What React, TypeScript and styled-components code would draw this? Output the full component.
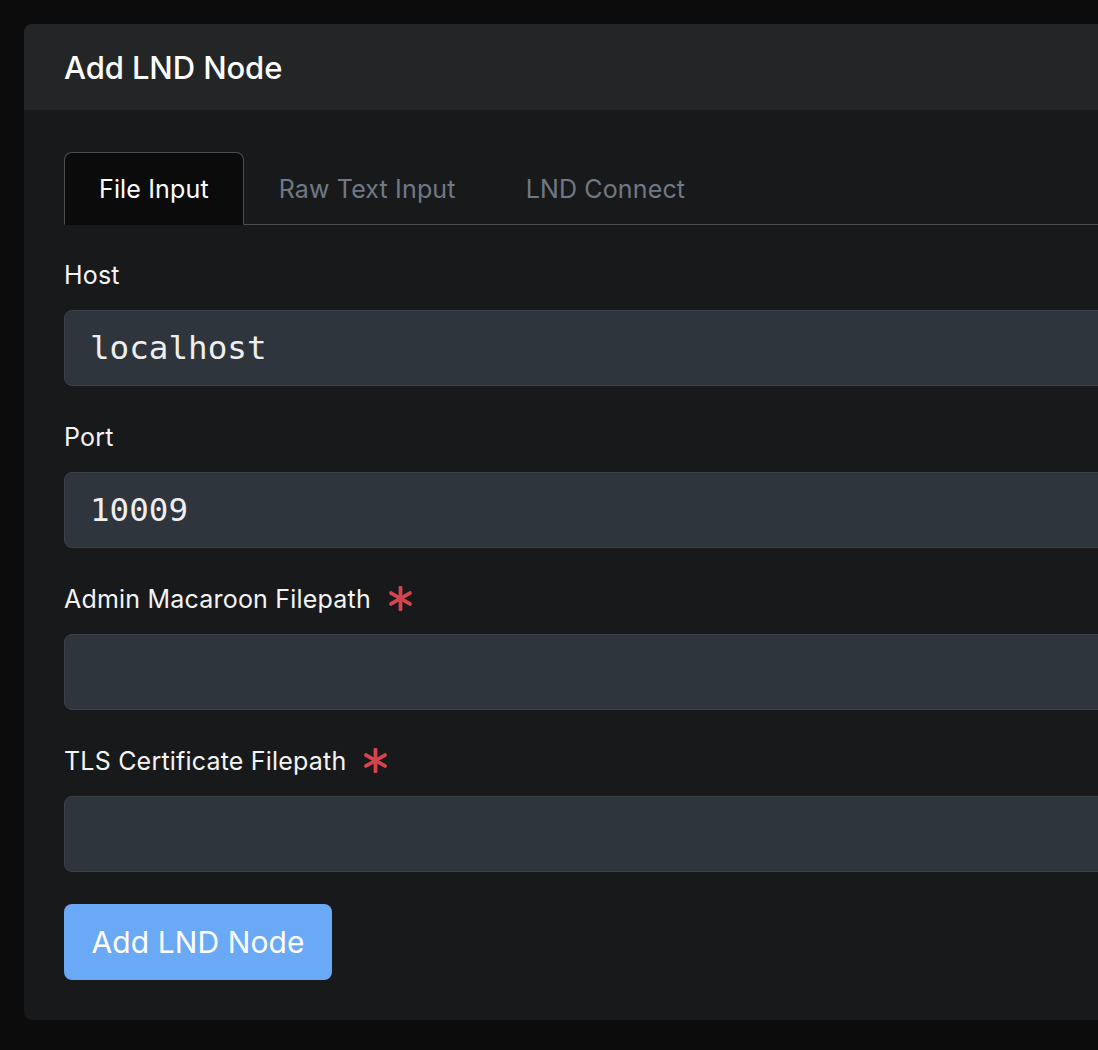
import { createGlobalStyle, styled } from "styled-components";
import { useState } from "react";

const GlobalStyle = createGlobalStyle`
  html, body {
    margin: 0;
    padding: 0;
    background: #0c0c0c;
    overflow: hidden;
  }
  body {
    font-family: Inter, "Noto Sans", "Liberation Sans", sans-serif;
    color: #f4f4f5;
  }
`;

const Page = styled.div`
  padding: 24px 0 0 24px;
  width: 100%;
  height: 1050px;
  box-sizing: border-box;
  overflow: hidden;
`;

const Panel = styled.div`
  width: 1240px;
  background: #18191b;
  border-radius: 8px 0 0 8px;
  overflow: hidden;
`;

const Header = styled.div`
  height: 86px;
  background: #242527;
  display: flex;
  align-items: center;
  padding: 0 40px;
  box-sizing: border-box;
`;

const Title = styled.h2`
  margin: 0;
  font-size: 31px;
  font-weight: 500;
  letter-spacing: -0.1px;
  color: #ffffff;
`;

const Body = styled.div`
  padding: 42px 40px 40px;
`;

const TabBar = styled.div`
  display: flex;
  border-bottom: 1.5px solid #4c4d50;
  margin-bottom: 33px;
`;

const Tab = styled.button<{ $active?: boolean }>`
  font-family: inherit;
  font-size: 25px;
  letter-spacing: 0.15px;
  height: 73px;
  padding: 0 34px;
  margin-bottom: -1.5px;
  border-radius: 8px 8px 0 0;
  border: 1.5px solid ${(p) => (p.$active ? "#4c4d50" : "transparent")};
  border-bottom: ${(p) => (p.$active ? "1.5px solid #0b0b0b" : "none")};
  background: ${(p) => (p.$active ? "#0b0b0b" : "transparent")};
  color: ${(p) => (p.$active ? "#ffffff" : "#6f7985")};
  cursor: pointer;
`;

const Field = styled.div`
  margin-bottom: 34px;

  &:last-of-type {
    margin-bottom: 32px;
  }
`;

const Label = styled.label`
  display: flex;
  align-items: center;
  height: 34px;
  margin-bottom: 18px;
  font-size: 25px;
  letter-spacing: 0.2px;
  color: #f4f4f5;
`;

const Required = styled.svg`
  margin-left: 17px;
  width: 25px;
  height: 25px;
`;

const Input = styled.input`
  display: block;
  width: 100%;
  height: 76px;
  box-sizing: border-box;
  background: #2f353d;
  border: 1.5px solid #3b424b;
  border-radius: 8px;
  padding: 0 25px;
  font-family: "DejaVu Sans Mono", "Liberation Mono", monospace;
  font-size: 32.6px;
  color: #eeeeef;
  outline: none;
`;

const SubmitButton = styled.button`
  height: 76px;
  padding: 0 27.5px;
  border: 0;
  border-radius: 8px;
  background: #6aa9f6;
  color: #ffffff;
  font-family: inherit;
  font-size: 30px;
  letter-spacing: 0.1px;
  cursor: pointer;
`;

const Asterisk = () => (
  <Required viewBox="0 0 24 24">
    <g stroke="#d6444d" strokeWidth="3.6" strokeLinecap="round">
      <line x1="12" y1="1.5" x2="12" y2="22.5" />
      <line x1="2.9" y1="6.75" x2="21.1" y2="17.25" />
      <line x1="2.9" y1="17.25" x2="21.1" y2="6.75" />
    </g>
  </Required>
);

const tabs = ["File Input", "Raw Text Input", "LND Connect"];

export default function App() {
  const [active, setActive] = useState(0);
  const [host, setHost] = useState("localhost");
  const [port, setPort] = useState("10009");

  return (
    <Page>
      <GlobalStyle />
      <Panel>
        <Header>
          <Title>Add LND Node</Title>
        </Header>
        <Body>
          <TabBar>
            {tabs.map((t, i) => (
              <Tab key={t} $active={i === active} onClick={() => setActive(i)}>
                {t}
              </Tab>
            ))}
          </TabBar>
          <Field>
            <Label>Host</Label>
            <Input value={host} onChange={(e) => setHost(e.target.value)} />
          </Field>
          <Field>
            <Label>Port</Label>
            <Input value={port} onChange={(e) => setPort(e.target.value)} />
          </Field>
          <Field>
            <Label>
              Admin Macaroon Filepath
              <Asterisk />
            </Label>
            <Input />
          </Field>
          <Field>
            <Label>
              TLS Certificate Filepath
              <Asterisk />
            </Label>
            <Input />
          </Field>
          <SubmitButton>Add LND Node</SubmitButton>
        </Body>
      </Panel>
    </Page>
  );
}
